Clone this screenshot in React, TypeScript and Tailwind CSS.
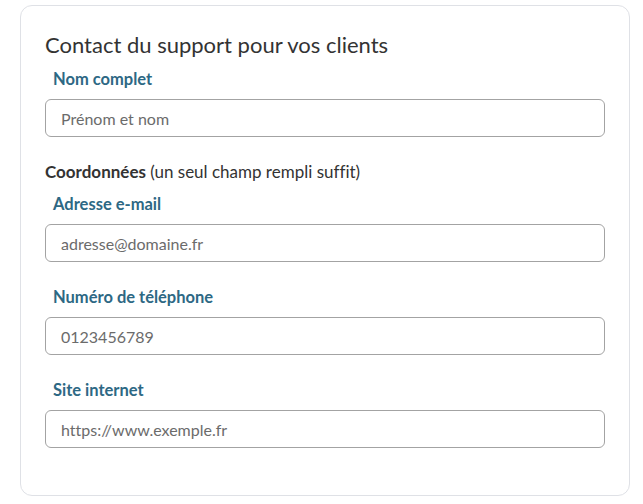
const fields = [
  { label: "Adresse e-mail", placeholder: "adresse@domaine.fr", type: "email" },
  { label: "Numéro de téléphone", placeholder: "0123456789", type: "tel" },
  { label: "Site internet", placeholder: "https://www.exemple.fr", type: "url" },
];

function Field({ label, placeholder, type }: { label: string; placeholder: string; type: string }) {
  return (
    <div className="flex flex-col">
      <label className="pl-2 text-[16.5px] font-bold leading-6 text-[#2d6884]">{label}</label>
      <input
        type={type}
        placeholder={placeholder}
        className="mt-2 h-[38px] w-full rounded-md border border-[#a3a3a3] bg-white px-[15px] text-[16px] text-[#333] outline-none placeholder:text-[#6b6b6b]"
      />
    </div>
  );
}

export default function App() {
  return (
    <div className="min-h-screen bg-white pl-5 pt-[5px] font-['Lato','Noto_Sans',sans-serif] [font-variant-ligatures:none]">
      <div className="w-[610px] h-[491px] rounded-xl border border-[#dfe1e6] bg-white px-6 pt-[25px]">
        <h2 className="text-[22px] font-normal leading-7 text-[#333]">
          Contact du support pour vos clients
        </h2>
        <div className="mt-[8px]">
          <Field label="Nom complet" placeholder="Prénom et nom" type="text" />
        </div>
        <p className="mt-[23px] text-[17px] leading-6 text-[#333]">
          <span className="font-bold">Coordonnées</span> (un seul champ rempli suffit)
        </p>
        <div className="mt-2 flex flex-col gap-[23px]">
          {fields.map((f) => (
            <Field key={f.label} {...f} />
          ))}
        </div>
      </div>
    </div>
  );
}
